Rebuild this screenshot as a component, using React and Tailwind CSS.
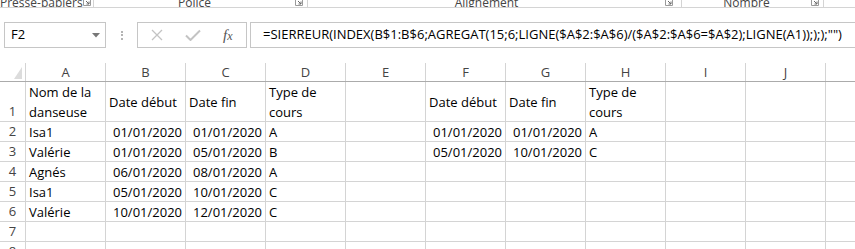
import React from 'react';

const COLS = ['A', 'B', 'C', 'D', 'E', 'F', 'G', 'H', 'I', 'J', 'K'];

// r = right aligned (dates), l = left aligned text
const ROWS = [
  { n: 1, h: 'h-[40px]', cells: [['Nom de la\ndanseuse'], ['Date début'], ['Date fin'], ['Type de\ncours'], [''], ['Date début'], ['Date fin'], ['Type de\ncours'], [''], [''], ['']] },
  { n: 2, cells: [['Isa1'], ['01/01/2020', 'r'], ['01/01/2020', 'r'], ['A'], [''], ['01/01/2020', 'r'], ['01/01/2020', 'r'], ['A'], [''], [''], ['']] },
  { n: 3, cells: [['Valérie'], ['01/01/2020', 'r'], ['05/01/2020', 'r'], ['B'], [''], ['05/01/2020', 'r'], ['10/01/2020', 'r'], ['C'], [''], [''], ['']] },
  { n: 4, cells: [['Agnés'], ['06/01/2020', 'r'], ['08/01/2020', 'r'], ['A'], [''], [''], [''], [''], [''], [''], ['']] },
  { n: 5, cells: [['Isa1'], ['05/01/2020', 'r'], ['10/01/2020', 'r'], ['C'], [''], [''], [''], [''], [''], [''], ['']] },
  { n: 6, cells: [['Valérie'], ['10/01/2020', 'r'], ['12/01/2020', 'r'], ['C'], [''], [''], [''], [''], [''], [''], ['']] },
  { n: 7, cells: COLS.map(() => ['']) },
  { n: 8, cells: COLS.map(() => ['']) },
];

const FORMULA = '=SIERREUR(INDEX(B$1:B$6;AGREGAT(15;6;LIGNE($A$2:$A$6)/($A$2:$A$6=$A$2);LIGNE(A1));););"")';

function Launcher() {
  return (
    <svg width="8" height="6" viewBox="0 0 8 6" className="shrink-0">
      <path d="M0.5 0 V5.5 H7.5 V0" fill="none" stroke="#9a9a9a" strokeWidth="1" />
      <path d="M3 1 L6 4 M6 1.5 V4 H3.5" fill="none" stroke="#6a6a6a" strokeWidth="1" />
    </svg>
  );
}

function RibbonGroup({ label, width, launcherPad }) {
  return (
    <div className={`${width} h-full flex items-end border-r border-[#d4d4d4] relative`}>
      <div className="flex-1 flex justify-center overflow-visible">
        <span className="leading-[14px] -mb-[3px] whitespace-nowrap">{label}</span>
      </div>
      <div className={`${launcherPad} self-start`}>
        <Launcher />
      </div>
    </div>
  );
}

export default function App() {
  return (
    <div className="w-[855px] h-[249px] overflow-hidden bg-white text-black font-['Open_Sans',sans-serif]">
      {/* ribbon group labels, cut off at the top */}
      <div className="h-[8px] border-b border-[#d4d4d4] flex overflow-hidden text-[12px] text-[#444]">
        <RibbonGroup label="Presse-papiers" width="w-[94px]" launcherPad="pr-[3px]" />
        <RibbonGroup label="Police" width="w-[214px]" launcherPad="pr-[4px]" />
        <RibbonGroup label="Alignement" width="w-[374px]" launcherPad="pr-[8px]" />
        <RibbonGroup label="Nombre" width="w-[142px]" launcherPad="pr-[4px]" />
        <div className="flex-1" />
      </div>

      {/* formula bar */}
      <div className="flex items-center pt-[10px] pl-[4px] h-[44px]">
        <div className="w-[102px] h-[26px] border border-[#c6c6c6] flex items-center pl-[6px] pr-[5px] text-[13px]">
          <span className="flex-1">F2</span>
          <svg width="8" height="5" viewBox="0 0 8 5">
            <path d="M0 0 H8 L4 4.5 Z" fill="#777" />
          </svg>
        </div>
        <div className="w-[31px] flex flex-col items-center gap-[1.5px]">
          <span className="w-[2px] h-[2px] bg-[#b4b4b4]" />
          <span className="w-[2px] h-[2px] bg-[#b4b4b4]" />
          <span className="w-[2px] h-[2px] bg-[#b4b4b4]" />
        </div>
        <div className="w-[110px] h-[26px] border border-[#c6c6c6] flex items-center">
          <svg width="12" height="12" viewBox="0 0 12 12" className="ml-[13px]">
            <path d="M1 1 L11 11 M11 1 L1 11" stroke="#c3c3c3" strokeWidth="1.3" />
          </svg>
          <svg width="16" height="12" viewBox="0 0 16 12" className="ml-[22px]">
            <path d="M1 6.5 L5.5 11 L15 1.5" fill="none" stroke="#c3c3c3" strokeWidth="2" />
          </svg>
          <span className="ml-[22px] font-['Liberation_Serif',serif] italic text-[15px] text-[#555] leading-none">
            f<span className="text-[12px]">x</span>
          </span>
        </div>
        <div className="ml-[3px] flex-1 h-[26px] border-y border-l border-[#c6c6c6] flex items-center pl-[12px] text-[13px] whitespace-nowrap overflow-hidden">
          {FORMULA}
        </div>
      </div>

      {/* sheet grid */}
      <div className="mt-[11px] text-[13px]">
        <div className="flex h-[19px] border-b border-[#ababab]">
          <div className="w-[26px] shrink-0 border-r border-[#d4d4d4] flex items-end justify-end pr-[3px] pb-[2px]">
            <svg width="8" height="12" viewBox="0 0 8 12">
              <path d="M8 0 V12 H0 Z" fill="#dcdcdc" />
            </svg>
          </div>
          {COLS.map((c) => (
            <div key={c} className="w-[80px] shrink-0 border-r border-[#d4d4d4] flex items-center justify-center text-[#444] leading-[18px]">
              {c}
            </div>
          ))}
        </div>
        {ROWS.map((row) => (
          <div key={row.n} className={`flex ${row.h || 'h-[20px]'}`}>
            <div className="w-[26px] shrink-0 border-r border-b border-[#d4d4d4] flex items-end justify-center text-[#444] leading-[19px]">
              {row.n}
            </div>
            {row.cells.map(([t, a], i) => (
              <div
                key={i}
                className={`w-[80px] shrink-0 border-r border-b border-[#d4d4d4] flex items-center px-[3px] whitespace-pre leading-[20px] ${a === 'r' ? 'justify-end' : 'justify-start'}`}
              >
                {t}
              </div>
            ))}
          </div>
        ))}
      </div>
    </div>
  );
}
